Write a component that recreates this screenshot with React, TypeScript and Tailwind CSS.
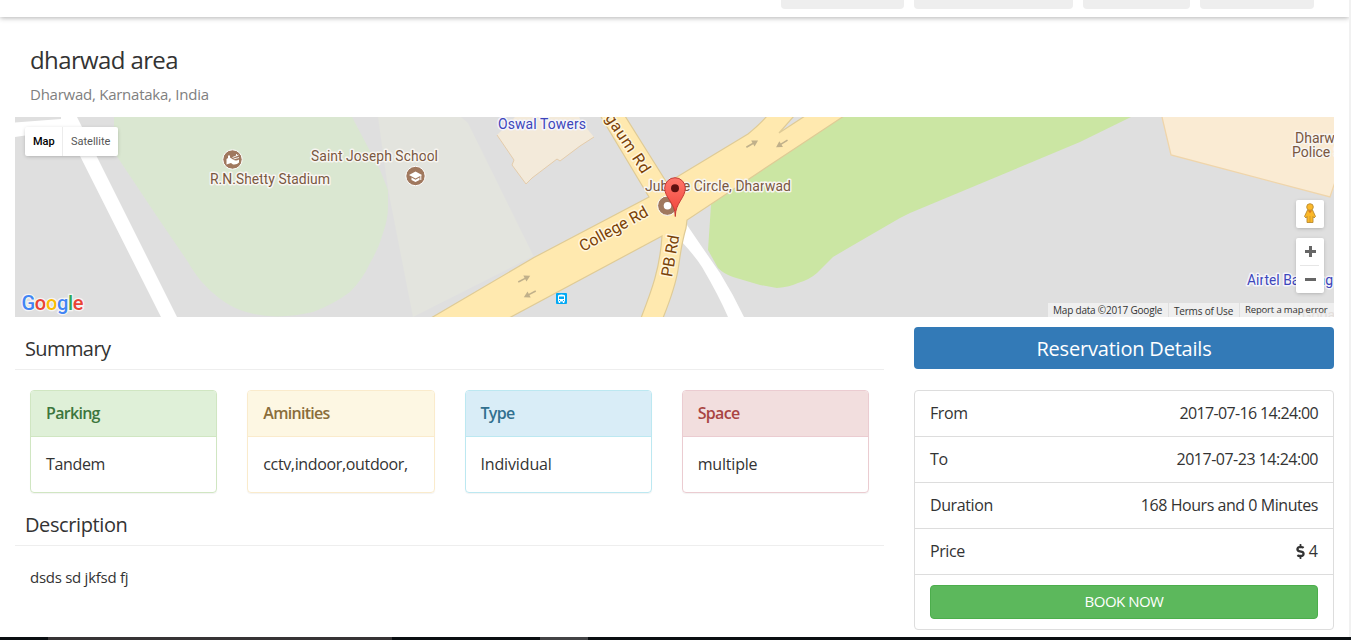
import { FaDollarSign } from "react-icons/fa";

const navTabs = ["w-[123px]", "w-[159px]", "w-[107px]", "w-[114px]"];

const panels = [
  { title: "Parking", value: "Tandem", border: "border-[#d0e6c2]", head: "bg-[#dff0d8] text-[#3c763d] border-[#d0e6c2]", spacing: "tracking-[-0.35px]" },
  { title: "Aminities", value: "cctv,indoor,outdoor,", border: "border-[#faebcc]", head: "bg-[#fdf7e3] text-[#8a6d3b] border-[#faebcc]", spacing: "tracking-[-0.35px]" },
  { title: "Type", value: "Individual", border: "border-[#bce8f1]", head: "bg-[#d9edf7] text-[#31708f] border-[#bce8f1]", spacing: "tracking-[-0.15px]" },
  { title: "Space", value: "multiple", border: "border-[#ebccd1]", head: "bg-[#f2dede] text-[#a94442] border-[#ebccd1]", spacing: "tracking-[-0.2px]" },
];

const details = [
  { label: "From", value: "2017-07-16 14:24:00", spacing: "tracking-[-0.65px]" },
  { label: "To", value: "2017-07-23 14:24:00", spacing: "tracking-[-0.5px]" },
  { label: "Duration", value: "168 Hours and 0 Minutes", spacing: "tracking-[-0.45px]" },
];

const place = "fill-[#795740] stroke-[#f7f5f1] [paint-order:stroke] [stroke-width:3px] [stroke-linejoin:round]";
const shop = "fill-[#3d46bb] stroke-[#f4f4fa] [paint-order:stroke] [stroke-width:3px] [stroke-linejoin:round]";
const road = "fill-[#7a4107] stroke-[#fff6dc] [paint-order:stroke] [stroke-width:3px] [stroke-linejoin:round]";

function Arrow({ x, y, angle }: { x: number; y: number; angle: number }) {
  return (
    <g transform={`translate(${x} ${y}) rotate(${angle})`}>
      <path d="M-6.5 0H3" stroke="#c0b08a" strokeWidth="1.6" />
      <path d="M1 -3.4 7 0 1 3.4Z" fill="#c0b08a" />
    </g>
  );
}

function MapDrawing() {
  return (
    <svg className="block h-[200px] w-[1319px] font-[Roboto,sans-serif] text-[14px]" viewBox="15 117 1319 200">
      <rect x="15" y="117" width="1319" height="200" fill="#dfdfdf" />
      <path d="M114 117V152L156 215 188 262C196 276 203 284 213 293Q225 304 240 310 256 316 277 316.500 296 316 313 312 334 304 350 292 363 279 370 263 379 248 383 233 388 219 388 207V190L380 170 352 117Z" fill="#dae7d1" />
      <path d="M378 117H461L468 123 533.500 256 413 317 388 189Z" fill="#e3e4de" />
      <path d="M15 122.500 61 119V117H77L177 317H161L80 156 62 130 15 137Z" fill="#fff" />
      <path d="M515 117 497 135 514 160 512 165 526 184 532 178 557 159 560 161 580 146 594 137 583 124 579 117Z" fill="#f3eada" />
      <path d="M497 135 514 160 512 165 526 184 532 178 557 159 560 161 580 146 594 137" fill="none" stroke="#e4ccab" strokeWidth="1" />
      <path d="M711 195V205L708 250 718 268Q724 274 733 277L760 285 777 288Q790 287 798 283 809 280 817 273L833 257 850 247 900 218 910 213 1080 142 1131 117H830Z" fill="#cbe6a3" />
      <path d="M1162 117 1171 155 1330 197 1340 174V117Z" fill="#faebd3" />
      <path d="M1162 117 1171 155 1330 197 1340 167" fill="none" stroke="#efd5ab" strokeWidth="1.300" />
      <path d="M687 225 702 247 720 273Q733 294 744 317H728Q719 296 702 267 695 256 681 241Z" fill="#fff" />
      <path d="M431 318 534 257.500 649 197 600.500 116H625L667 183 748 134Q760 124 767 116H794L779 133 805 116H844L687 220 686 228C681 245 681 251 678 270Q675 288 663 318H641C651 292 660 269 662 236L509 318Z" fill="#ffe9af" stroke="#dfcb96" strokeWidth="1.200" />
      <Arrow x={752} y={144} angle={-30} />
      <Arrow x={782} y={143.500} angle={148} />
      <Arrow x={524} y={279} angle={-28} />
      <Arrow x={530} y={294} angle={152} />
      <text className={shop} x="498" y="129" textLength="88">Oswal Towers</text>
      <text className={place} x="311" y="161" textLength="127">Saint Joseph School</text>
      <text className={place} x="210" y="184" textLength="120">R.N.Shetty Stadium</text>
      <text className={place} x="645" y="191" textLength="146">Jubilee Circle, Dharwad</text>
      <text className={place} x="1295" y="143">Dharwad</text>
      <text className={place} x="1292" y="157">Police Station</text>
      <text className={shop} x="1247" y="285" textLength="86">Airtel Banking</text>
      <text className={road} fontSize="16" transform="translate(583 252) rotate(-29)" textLength="76">College Rd</text>
      <text className={road} fontSize="16" transform="translate(672 277.500) rotate(-80)" textLength="42">PB Rd</text>
      <text className={road} fontSize="16" transform="translate(591 97) rotate(56.500)" textLength="93">Belgaum Rd</text>
      <g stroke="#fff" strokeWidth="1">
        <circle cx="232.500" cy="159.500" r="9.700" fill="#a0785e" />
        <circle cx="415.500" cy="176" r="9.700" fill="#a0785e" />
        <circle cx="667.300" cy="205.700" r="9.700" fill="#a0785e" />
      </g>
      <path d="M226.500 159 228 158V155.500H230V157.500L233 159.500Q236 161.500 239 159.500V162.500Q237 165 233 164.500L231 163 226.500 164.500Z" fill="#fff" />
      <path d="M232.500 157.500 238.500 155M233.500 159 239 157.500M236.500 154V156" stroke="#fff" strokeWidth=".9" />
      <path d="M415.500 171.500 422 175 415.500 178.500 409 175ZM411.500 177.500 415.500 179.700 419.500 177.500V180L415.500 182 411.500 180Z" fill="#fff" />
      <path d="M420.800 175V180" stroke="#fff" />
      <circle cx="667.500" cy="205.700" r="3.800" fill="#fff" />
      <rect x="556" y="293" width="11" height="11" rx="1" fill="#03a9f4" />
      <path d="M558.500 295Q561.500 293.800 564.500 295L565 296V301.500H564.300V303H562.800V301.500H560.200V303H558.700V301.500H558V296ZM559 296.500V299H564V296.500ZM559 300V301H560V300ZM563 300V301H564V300Z" fill="#fff" fillRule="evenodd" />
      <defs>
        <linearGradient id="pin" x2="0" y2="1">
          <stop stopColor="#ff776b" />
          <stop offset="1" stopColor="#ef4037" />
        </linearGradient>
      </defs>
      <path d="M675.300 216.500C675.300 203 664.700 198 664.700 188A10.300 10.300 0 0 1 685.300 188C685.300 198 675.300 203 675.300 216.500Z" fill="url(#pin)" stroke="#c53a35" strokeWidth="1" />
      <circle cx="675" cy="188.200" r="4" fill="#5f1110" />
      <circle cx="1107.500" cy="322" r="9" fill="#c8cbea" />
      <text x="1302" y="320" fill="#b9a89d">Gopal</text>
    </svg>
  );
}

function Pegman() {
  return (
    <svg className="h-5 w-3" viewBox="0 0 12 20">
      <path d="M3.500 7H8.500L11.500 13.500 10 15 9 13.500V19.500H3V13.500L2 15 .5 13.500Z" fill="#fbb829" stroke="#ba8b31" strokeWidth=".9" />
      <circle cx="6" cy="4" r="3.300" fill="#fbb829" stroke="#ba8b31" strokeWidth=".9" />
      <path d="M4 7.800H8L6 10.300Z" fill="#e07a1c" />
      <path d="M6 13V19.500" stroke="#ba8b31" strokeWidth=".6" />
    </svg>
  );
}

function MapView() {
  return (
    <div className="relative ml-[15px] h-[200px] w-[1319px] overflow-hidden">
      <MapDrawing />
      <div className="absolute left-[10px] top-[10px] flex h-[29px] w-[93px] items-center rounded-[2px] bg-white font-[Roboto,sans-serif] text-[11px] shadow-[0_1px_4px_-1px_rgba(0,0,0,0.3)]">
        <span className="flex h-full w-[38px] items-center border-r border-[#ececec] pl-2 pt-px font-medium text-black">Map</span>
        <span className="flex-1 pl-2 pt-px text-[#565656]">Satellite</span>
      </div>
      <svg className="absolute left-[5px] top-[172px] h-[28px] w-[70px]" viewBox="20 289 70 28">
        <text x="21.500" y="309.500" textLength="62" className="stroke-white/70 font-[Roboto,sans-serif] text-[20px] font-medium [paint-order:stroke] [stroke-width:2.5px]">
          <tspan fill="#4285f4">G</tspan><tspan fill="#ea4335">o</tspan><tspan fill="#fbbc05">o</tspan><tspan fill="#4285f4">g</tspan><tspan fill="#34a853">l</tspan><tspan fill="#ea4335">e</tspan>
        </text>
      </svg>
      <div className="absolute left-[1281px] top-[83px] flex size-7 items-center justify-center rounded-[2px] bg-white pb-[2px] shadow-[0_1px_4px_-1px_rgba(0,0,0,0.3)]">
        <Pegman />
      </div>
      <div className="absolute left-[1281px] top-[121px] flex h-[55px] w-7 flex-col items-center rounded-[2px] bg-white shadow-[0_1px_4px_-1px_rgba(0,0,0,0.3)]">
        <svg className="h-[55px] w-7" viewBox="0 0 28 55">
          <path d="M9 13.500H20M14.500 8V19M9 41.500H20" stroke="#666" strokeWidth="3" />
          <path d="M4 27.500H23" stroke="#e6e6e6" />
        </svg>
      </div>
      <div className="absolute left-[1033px] top-[186px] flex h-[14px] w-[286px] items-center bg-[#f5f5f5]/70 text-[10px] text-[#333]">
        <span className="w-[120px] whitespace-nowrap pl-[5px] tracking-[-0.2px]">Map data ©2017 Google</span>
        <span className="h-full w-[71px] whitespace-nowrap border-l border-[#dfdfdf] pl-[5px] pt-px tracking-[-0.2px]">Terms of Use</span>
        <span className="h-full whitespace-nowrap border-l border-[#dfdfdf] pl-[5px] text-[9.5px] tracking-[-0.15px]">Report a map error</span>
      </div>
    </div>
  );
}

export default function App() {
  return (
    <div className="flex h-[640px] w-[1351px] flex-col overflow-hidden bg-white font-['Open_Sans',sans-serif] text-[#333]">
      <div className="flex h-[637px]">
        <div className="w-[1349px]">
          <header className="flex h-[17px] items-start justify-end gap-[10px] pr-[35px] shadow-[0_1px_5px_rgba(0,0,0,0.3)]">
            {navTabs.map((w) => (
              <div key={w} className={`h-[9px] rounded-b-[4px] bg-[#eee] ${w}`} />
            ))}
          </header>
          <section className="h-[100px] pl-[30px] pt-[27px]">
            <h1 className="text-[24px] leading-8 tracking-[-0.62px]">dharwad area</h1>
            <p className="mt-[7px] text-[15px] leading-[22px] tracking-[-0.25px] text-[#808080]">Dharwad, Karnataka, India</p>
          </section>
          <MapView />
          <div className="flex">
            <main className="ml-[15px] w-[869px]">
              <h2 className="h-[53px] border-b border-[#eee] pl-[10px] pt-[18px] text-[20px] leading-7 tracking-[-0.6px]">Summary</h2>
              <div className="mt-5 grid grid-cols-4">
                {panels.map((p) => (
                  <div key={p.title} className="px-[15px]">
                    <div className={`h-[103px] rounded-[4px] border shadow-[0_1px_1px_rgba(0,0,0,0.05)] ${p.border}`}>
                      <div className={`flex h-[46px] items-center rounded-t-[3px] border-b pb-px pl-[15px] text-[16px] font-semibold tracking-[-0.7px] ${p.head}`}>{p.title}</div>
                      <div className={`pl-[15px] pt-[15px] text-[16px] leading-6 ${p.spacing}`}>{p.value}</div>
                    </div>
                  </div>
                ))}
              </div>
              <h2 className="h-[53px] border-b border-[#eee] pl-[10px] pt-[18px] text-[20px] leading-7 tracking-[-0.4px]">Description</h2>
              <p className="pl-[15px] pt-[20px] text-[15px] leading-[22px] tracking-[-0.27px]">dsds sd jkfsd fj</p>
            </main>
            <aside className="ml-[30px] w-[420px] pt-[10px]">
              <h2 className="flex h-[42px] items-center justify-center rounded-[4px] bg-[#337ab7] pt-px text-[20px] tracking-[-0.2px] text-white">Reservation Details</h2>
              <div className="mt-[21px] h-[240px] rounded-[4px] border border-[#ddd] text-[16px]">
                {details.map((d) => (
                  <div key={d.label} className="flex h-[46px] items-center justify-between border-b border-[#ddd] px-[15px] pb-px">
                    <span className="tracking-[-0.4px]">{d.label}</span>
                    <span className={d.spacing}>{d.value}</span>
                  </div>
                ))}
                <div className="flex h-[46px] items-center justify-between border-b border-[#ddd] px-[15px] pb-px">
                  <span className="tracking-[-0.4px]">Price</span>
                  <span className="flex items-center gap-[3px]"><FaDollarSign className="size-[15px] translate-x-[2px]" />4</span>
                </div>
                <div className="px-[15px] pt-[10px]">
                  <button className="h-[34px] w-full rounded-[4px] border border-[#4cae4c] bg-[#5cb85c] pb-[2px] text-[15px] font-normal tracking-[-0.5px] text-white">BOOK NOW</button>
                </div>
              </div>
            </aside>
          </div>
        </div>
        <div className="w-[2px] bg-[#f1f1f1]" />
      </div>
      <footer className="flex h-[3px] bg-[#0b0f12]">
        <div className="ml-12 w-[344px] bg-[#373435]" />
        <div className="ml-[148px] w-12 bg-[#434345]" />
      </footer>
    </div>
  );
}
